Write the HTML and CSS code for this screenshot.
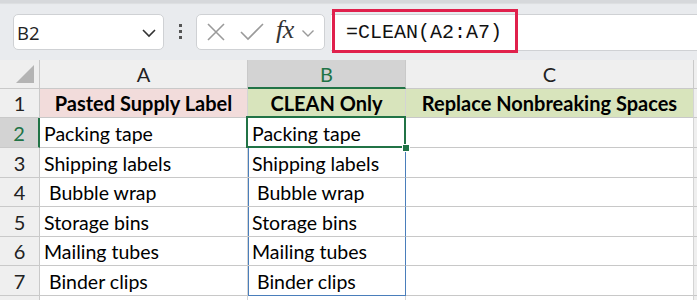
FILE: index.html
```html
<!DOCTYPE html>
<html>
<head>
<meta charset="utf-8">
<link rel="stylesheet" href="styles.css">
</head>
<body>
<div class="topstrip"></div>
<div class="toolbar">
  <div class="namebox">
    <span class="nb-text">B2</span>
    <svg class="chev" width="16" height="10" viewBox="0 0 16 10"><path d="M2 2 L8 8 L14 2" fill="none" stroke="#333" stroke-width="1.6"/></svg>
  </div>
  <div class="sep"><span></span><span></span><span></span></div>
  <div class="funcbox">
    <svg class="ico" width="20" height="20" viewBox="0 0 20 20"><path d="M2 2 L18 18 M18 2 L2 18" stroke="#9a9a9a" stroke-width="1.6" fill="none"/></svg>
    <svg class="ico check" width="26" height="20" viewBox="0 0 26 20"><path d="M2 10 L9 17 L24 2" stroke="#9a9a9a" stroke-width="1.6" fill="none"/></svg>
    <span class="fx">fx</span>
    <svg class="chev2" width="14" height="9" viewBox="0 0 14 9"><path d="M1.5 1.5 L7 7 L12.5 1.5" fill="none" stroke="#9a9a9a" stroke-width="1.4"/></svg>
  </div>
  <div class="formula">
    <span class="ftext">=CLEAN(A2:A7)</span>
    <div class="hl"></div>
  </div>
</div>
<div class="sheet">
  <div class="corner"><svg width="20" height="20" viewBox="0 0 20 20"><path d="M19 1 L19 19 L1 19 Z" fill="#b4b4b4"/></svg></div>
  <div class="ch">A</div>
  <div class="ch sel">B</div>
  <div class="ch">C</div>
  <div class="ch end"></div>

  <div class="rh">1</div>
  <div class="c h pink">Pasted Supply Label</div>
  <div class="c h green">CLEAN Only</div>
  <div class="c h green">Replace Nonbreaking Spaces</div>
  <div class="c end"></div>

  <div class="rh sel">2</div>
  <div class="c">Packing tape</div>
  <div class="c active">Packing tape</div>
  <div class="c"></div>
  <div class="c end"></div>

  <div class="rh">3</div>
  <div class="c">Shipping labels</div>
  <div class="c rng">Shipping labels</div>
  <div class="c"></div>
  <div class="c end"></div>

  <div class="rh">4</div>
  <div class="c">&nbsp;Bubble wrap</div>
  <div class="c rng">&nbsp;Bubble wrap</div>
  <div class="c"></div>
  <div class="c end"></div>

  <div class="rh">5</div>
  <div class="c">Storage bins</div>
  <div class="c rng">Storage bins</div>
  <div class="c"></div>
  <div class="c end"></div>

  <div class="rh">6</div>
  <div class="c">Mailing tubes</div>
  <div class="c rng">Mailing tubes</div>
  <div class="c"></div>
  <div class="c end"></div>

  <div class="rh">7</div>
  <div class="c">&nbsp;Binder clips</div>
  <div class="c rng last">&nbsp;Binder clips</div>
  <div class="c"></div>
  <div class="c end"></div>

  <div class="rh">8</div>
  <div class="c"></div>
  <div class="c"></div>
  <div class="c"></div>
  <div class="c end"></div>
</div>
</body>
</html>
```
FILE: styles.css
```css
html, body {
  margin: 0;
  padding: 0;
  width: 697px;
  height: 300px;
  overflow: hidden;
  background: #e9ebee;
  font-family: Lato, "Noto Sans", sans-serif;
}
.topstrip {
  height: 3px;
  background: #d6d8db;
  box-shadow: 0 1px 1px rgba(0,0,0,0.06);
}
.toolbar {
  height: 57px;
  display: flex;
  align-items: center;
  padding-left: 13px;
  box-sizing: border-box;
}
.namebox {
  width: 151px;
  height: 36px;
  box-sizing: border-box;
  background: #fff;
  border: 1px solid #cfd1d4;
  border-radius: 5px;
  display: flex;
  align-items: center;
  justify-content: space-between;
  padding: 0 6px 0 3px;
  margin-top: 1px;
}
.nb-text {
  font-family: "Open Sans", sans-serif;
  font-size: 18.5px;
  color: #222;
}
.chev { margin-top: 2px; }
.sep {
  width: 32px;
  display: flex;
  flex-direction: column;
  align-items: center;
  gap: 3px;
}
.sep span {
  width: 3px;
  height: 3px;
  background: #555;
}
.funcbox {
  width: 129px;
  height: 36px;
  box-sizing: border-box;
  background: #fff;
  border: 1px solid #cfd1d4;
  border-radius: 5px;
  display: flex;
  align-items: center;
  padding-left: 9px;
  margin-top: 1px;
}
.ico { flex: none; }
.check { margin-left: 13px; }
.fx {
  font-family: "Liberation Serif", "DejaVu Serif", serif;
  font-style: italic;
  font-size: 26px;
  color: #333;
  margin-left: 11px;
  margin-top: -5px;
  letter-spacing: -0.5px;
}
.chev2 { margin-left: 7px; margin-top: 2px; }
.formula {
  position: relative;
  flex: 1;
  height: 37px;
  box-sizing: border-box;
  margin-left: 6px;
  margin-top: 1px;
  background: #fff;
  border-top: 1px solid #cfd1d4;
  border-bottom: 1px solid #cfd1d4;
  display: flex;
  align-items: center;
  padding-left: 15px;
}
.ftext {
  font-family: "Liberation Mono", monospace;
  font-size: 20px;
  color: #111;
}
.hl {
  position: absolute;
  left: 1px;
  top: -6px;
  width: 186px;
  height: 44px;
  box-sizing: border-box;
  border: 3.5px solid #e0204c;
}
.sheet {
  display: grid;
  grid-template-columns: 40px 208px 158px 288px 3px;
  grid-template-rows: 29px 29px 30px 30px 29px 30px 29px 30px 30px;
  background: #fff;
}
.corner, .ch, .rh {
  background: #efefef;
  box-sizing: border-box;
  border-right: 1px solid #c9c9c9;
  border-bottom: 1px solid #c9c9c9;
}
.corner {
  display: flex;
  align-items: flex-end;
  justify-content: flex-end;
  padding: 0 4px 4px 0;
}
.ch {
  font-size: 20px;
  color: #222;
  text-align: center;
  line-height: 28px;
}
.ch.sel {
  background: #d3d3d3;
  color: #217346;
  border-bottom: 2px solid #217346;
}
.ch.end, .c.end { background: #efefef; border-right: none; }
.rh {
  font-size: 20px;
  color: #222;
  text-align: center;
  display: flex;
  align-items: flex-end;
  justify-content: center;
  padding-bottom: 2px;
}
.rh.sel {
  background: #d3d3d3;
  color: #217346;
  border-right: 2px solid #217346;
}
.c {
  box-sizing: border-box;
  border-right: 1px solid #d4d4d4;
  border-bottom: 1px solid #c8c8c8;
  font-size: 19.5px;
  color: #000;
  padding: 0 0 2px 4px;
  display: flex;
  align-items: flex-end;
  white-space: pre;
}
.c.h {
  font-weight: 700;
  font-size: 20px;
  justify-content: center;
  padding-left: 0;
}
.pink { background: #f2dcdb; }
.green { background: #d8e4bc; }
.rng {
  border-right-color: #4a7ebb;
  box-shadow: inset 1px 0 0 #4a7ebb;
}
.rng.last { border-bottom-color: #4a7ebb; }
.active {
  position: relative;
}
.active::after {
  content: "";
  position: absolute;
  left: -2px;
  top: -2px;
  right: -1px;
  bottom: -1px;
  border: 2px solid #217346;
  pointer-events: none;
}
.active::before {
  content: "";
  position: absolute;
  right: -5px;
  bottom: -5px;
  width: 6px;
  height: 6px;
  background: #217346;
  border: 1px solid #fff;
  z-index: 2;
}
```
